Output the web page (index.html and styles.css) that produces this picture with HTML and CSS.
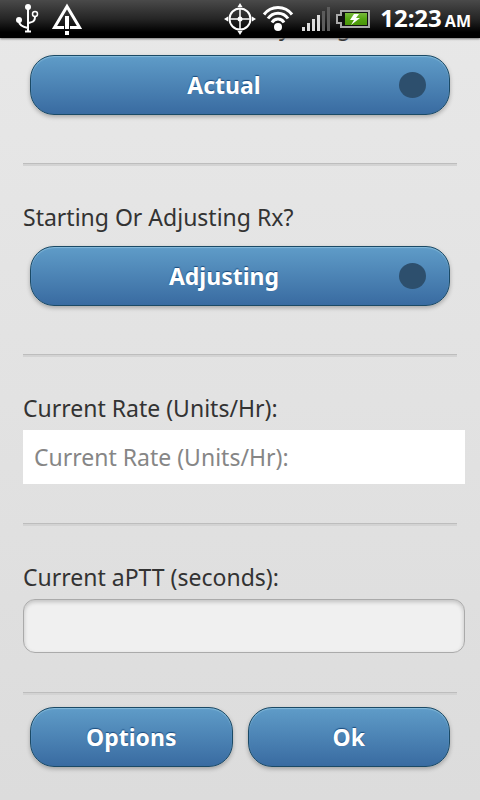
FILE: index.html
```html
<!DOCTYPE html>
<html lang="en">
<head>
<meta charset="utf-8">
<meta name="viewport" content="width=device-width, initial-scale=1">
<title>Rate Adjustment</title>
<link rel="stylesheet" href="styles.css">
</head>
<body>
<header class="status">
  <div class="status-left">
    <svg class="usb" width="24" height="30" viewBox="0 0 24 30" fill="none" stroke="#fff" stroke-width="2" aria-hidden="true">
      <path d="M12 3v25M3 16v1c0 4 4 6 9 7M19 13c0 5-3 5-7 6"/>
      <path d="M9 27.500h6"/>
      <circle cx="12" cy="3" r="3" fill="#fff" stroke="none"/>
      <circle cx="3" cy="16" r="3" fill="#fff" stroke="none"/>
      <circle cx="19" cy="10" r="2.500" stroke-width="1.500"/>
    </svg>
    <svg class="warn" width="32" height="34" viewBox="0 0 32 34" aria-hidden="true">
      <path d="M13 25.500H3.500L16 4.500l12.500 21H19" fill="none" stroke="#fff" stroke-width="3"/>
      <path d="M14 14h4v13h-4zM14 29h4v4h-4z" fill="#fff"/>
    </svg>
  </div>
  <div class="status-right">
    <svg width="32" height="32" viewBox="0 0 32 32" aria-hidden="true">
      <g fill="none" stroke="#fff"><circle cx="16" cy="16" r="10.500" stroke-width="2"/><path d="M16 6v20M6 16h20" stroke-width="1.500"/></g>
      <g fill="#fff"><circle cx="16" cy="16" r="2.500"/><path d="M16 0l2.500 4h-5zM16 32l2.500-4h-5zM0 16l4-2.500v5zM32 16l-4-2.500v5z"/></g>
    </svg>
    <svg class="wifi" width="32" height="28" viewBox="0 0 32 28" fill="none" stroke="#fff" stroke-width="3" aria-hidden="true">
      <path d="M2 9.500a17.500 17.500 0 0 1 28 0M6 13.500a12 12 0 0 1 20 0M10 17.500a7 7 0 0 1 12 0"/>
      <circle cx="16" cy="22" r="4" fill="#fff" stroke="none"/>
    </svg>
    <svg class="signal" width="28" height="26" viewBox="0 0 28 26" aria-hidden="true">
      <path d="M0 21h3v4H0zM5 17h3v8H5zM10 13h3v12h-3zM15 9h3v16h-3z" fill="#ddd"/>
      <path d="M20 5h3v20h-3zM25 1h3v24h-3z" fill="#5c5c5c"/>
    </svg>
    <svg class="battery" width="34" height="20" viewBox="0 0 34 20" aria-hidden="true">
      <defs><linearGradient id="charge" x2="0" y2="1"><stop stop-color="#79b93c"/><stop offset=".5" stop-color="#55a512"/><stop offset="1" stop-color="#4a9508"/></linearGradient></defs>
      <path d="M5 2h28v16H5v-4H1V6h4z" fill="#111" stroke="#a9a9a9" stroke-width="2"/>
      <path d="M9 4h22v12H9z" fill="url(#charge)"/>
      <path d="M18 5h5l-3 4h4l-9 7 3-5h-4z" fill="#fff"/>
    </svg>
    <time class="clock" datetime="00:23"><span>12:23</span><small>AM</small></time>
  </div>
</header>
<main>
  <form>
    <section class="first">
      <label for="weight">Use Ideal Or Actual Body Weight?</label>
      <div class="picker"><select id="weight"><option>Actual</option></select></div>
    </section>
    <section>
      <label for="mode">Starting Or Adjusting Rx?</label>
      <div class="picker"><select id="mode"><option>Adjusting</option></select></div>
    </section>
    <section>
      <label for="rate">Current Rate (Units/Hr):</label>
      <input class="active" id="rate" type="text" placeholder="Current Rate (Units/Hr):">
    </section>
    <section>
      <label for="aptt">Current aPTT (seconds):</label>
      <input id="aptt" type="text">
    </section>
    <div class="actions">
      <button type="button">Options</button>
      <button type="button">Ok</button>
    </div>
  </form>
</main>
</body>
</html>
```

FILE: styles.css
```css
* { box-sizing: border-box; }

body {
  margin: 0;
  min-height: 100vh;
  background: linear-gradient(#e8e8e8, #dcdcdc);
  color: #333;
  font: 23px/32px "Noto Sans", "Open Sans", sans-serif;
}

.status {
  position: sticky;
  top: 0;
  z-index: 1;
  display: flex;
  justify-content: space-between;
  height: 38px;
  padding: 0 9px 0 16px;
  background: linear-gradient(#4a4a4a, #252525 50%, #000 85%);
  box-shadow: 0 1px 2px #777;
  color: #fff;
}
.status-left, .status-right { display: flex; align-items: center; }
.status-left { gap: 11px; }
.status-right { gap: 6px; }
.status svg { display: block; overflow: visible; }
.signal { margin-left: 2px; }
.clock {
  display: flex;
  align-items: baseline;
  gap: 3px;
  margin-left: 4px;
  font-size: 24px;
  font-weight: 700;
  white-space: nowrap;
}
.clock small { font-size: 16px; }

main { padding: 0 15px 32px 23px; }

section {
  display: flex;
  flex-direction: column;
  padding-top: 35px;
}
section::after {
  content: "";
  height: 2px;
  margin: 39px 8px 0 0;
  border-top: 1px solid #bdbdbd;
  background: #d3d3d3;
}
section:has(.picker)::after { margin-top: 48px; }
.first { margin-top: -28px; padding-top: 0; }

label { margin-bottom: 6px; }

.picker {
  position: relative;
  margin: 7px 15px 0 7px;
}
.picker::after {
  content: "";
  position: absolute;
  top: 50%;
  right: 24px;
  width: 27px;
  height: 26px;
  margin-top: -13px;
  border-radius: 50%;
  background: #2d4f6d;
  pointer-events: none;
}

select, button {
  width: 100%;
  height: 60px;
  border: 1px solid #1b4a66;
  border-radius: 24px;
  background: linear-gradient(#5f9cc8, #396ba1);
  box-shadow: inset 0 1px 1px #86bbda, 0 2px 4px #0004;
  color: #fff;
  font: 700 23px/32px "Noto Sans", "Open Sans", sans-serif;
  text-align: center;
  text-shadow: 0 -1px 1px #194b7e;
}
select {
  display: block;
  appearance: none;
  padding: 0 48px 0 16px;
  text-align-last: center;
}

input {
  width: 100%;
  height: 54px;
  padding: 0 10px;
  border: 1px solid #aaa;
  border-radius: 12px;
  background: #f0f0f0;
  box-shadow: inset 0 2px 4px #0003;
  color: #333;
  font: inherit;
}
input.active {
  border-color: #fff;
  border-radius: 0;
  background: #fff;
  box-shadow: none;
}
input::placeholder { color: #868686; opacity: 1; }

.actions {
  display: grid;
  grid-template-columns: 1fr 1fr;
  gap: 15px;
  margin: 12px 15px 0 7px;
}
```
